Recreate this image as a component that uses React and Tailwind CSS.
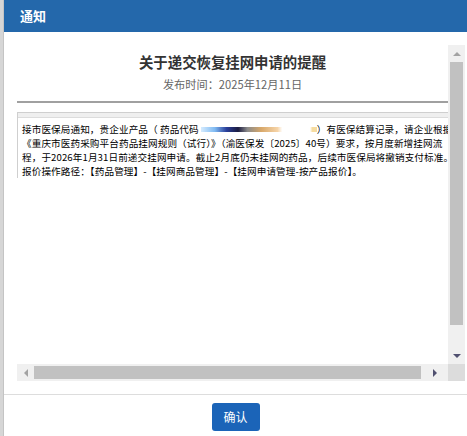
import React from 'react';

const font = { fontFamily: '"Noto Sans CJK SC", "Microsoft YaHei", sans-serif' };

const lines = [
  '《重庆市医药采购平台药品挂网规则（试行）》（渝医保发〔2025〕40号）要求，按月度新增挂网流',
  '程，于2026年1月31日前递交挂网申请。截止2月底仍未挂网的药品，后续市医保局将撤销支付标准。',
  '报价操作路径：【药品管理】-【挂网商品管理】-【挂网申请管理-按产品报价】。',
];

const App = () => {
  return (
    <div className="w-[467px] h-[436px] flex bg-white overflow-hidden" style={font}>
      {/* page behind the modal */}
      <div className="w-[4px] h-full bg-[#d6d6d6] border-r border-[#c4c4c4]"></div>

      <div className="flex-1 flex flex-col bg-white">
        {/* header */}
        <div className="h-[32px] bg-[#2468ab] flex items-center pl-[16px] text-white font-bold text-[13px]">
          通知
        </div>

        {/* body */}
        <div className="pt-[13px] pl-[13px] pr-[1px] pb-[13px]">
          <div className="flex">
            {/* viewport, content is a little wider than it */}
            <div className="w-[431px] h-[319px] overflow-hidden text-[#333]">
              <div className="w-[431px] text-center pt-[8px]">
                <div className="text-[14.4px] font-bold leading-[18px]">关于递交恢复挂网申请的提醒</div>
                <div className="text-[11.2px] text-[#666] leading-[14px] mt-[6px]">发布时间：2025年12月11日</div>
                <div className="h-[2px] bg-[#a0a0a0] mt-[10px]"></div>
              </div>
              <div className="mt-[9px] w-[460px] border-t border-l border-[#cfcfcf]">
                <div className="h-[5px] bg-[#efefef] border-b border-[#dcdcdc]"></div>
                <div className="pl-[4px] pt-[4px] text-[9.6px] leading-[14px] text-black whitespace-nowrap tracking-[0.1px]">
                  <div className="flex items-center">
                    <span>接市医保局通知，贵企业产品（ 药品代码</span>
                    <span className="inline-block w-[116px] h-[5px] ml-[2px] blur-[0.6px] bg-[linear-gradient(90deg,#d6ecff_0%,#7fbaf2_12%,#2a3f9a_22%,#1c1c40_32%,#8a8a8a_40%,#d8a86a_52%,#f6d4a8_66%,#ffffff_70%,#ffffff_94%,#f6dca0_96%,#f6dca0_100%)]"></span>
                    <span>）有医保结算记录，请企业根据</span>
                  </div>
                  {lines.map((l, i) => (
                    <div key={i}>{l}</div>
                  ))}
                </div>
              </div>
            </div>

            {/* vertical scrollbar */}
            <div className="w-[17px] h-[319px] bg-[#f0f0f0] flex flex-col items-center">
              <div className="h-[17px] flex items-center justify-center">
                <div className="w-0 h-0 border-l-[4px] border-r-[4px] border-b-[4px] border-l-transparent border-r-transparent border-b-[#a3a3a3]"></div>
              </div>
              <div className="w-[13px] h-[263px] bg-[#c1c1c1]"></div>
              <div className="flex-1"></div>
              <div className="h-[17px] flex items-center justify-center">
                <div className="w-0 h-0 border-l-[4px] border-r-[4px] border-t-[4px] border-l-transparent border-r-transparent border-t-[#505070]"></div>
              </div>
            </div>
          </div>

          {/* horizontal scrollbar */}
          <div className="flex h-[17px]">
            <div className="w-[431px] bg-[#f0f0f0] flex items-center">
              <div className="w-[17px] flex justify-center">
                <div className="w-0 h-0 border-t-[4px] border-b-[4px] border-r-[4px] border-t-transparent border-b-transparent border-r-[#a3a3a3]"></div>
              </div>
              <div className="w-[387px] h-[13px] bg-[#c1c1c1]"></div>
              <div className="flex-1 flex justify-center">
                <div className="w-0 h-0 border-t-[4px] border-b-[4px] border-l-[4px] border-t-transparent border-b-transparent border-l-[#505070]"></div>
              </div>
            </div>
            <div className="w-[17px] bg-[#dcdcdc]"></div>
          </div>
        </div>

        {/* footer */}
        <div className="flex-1 border-t border-[#dddddd] flex justify-center pt-[8px]">
          <button className="w-[48px] h-[28px] rounded-[3px] bg-[#1b64b8] text-white text-[12px]">确认</button>
        </div>
      </div>
    </div>
  );
};

export default App;
